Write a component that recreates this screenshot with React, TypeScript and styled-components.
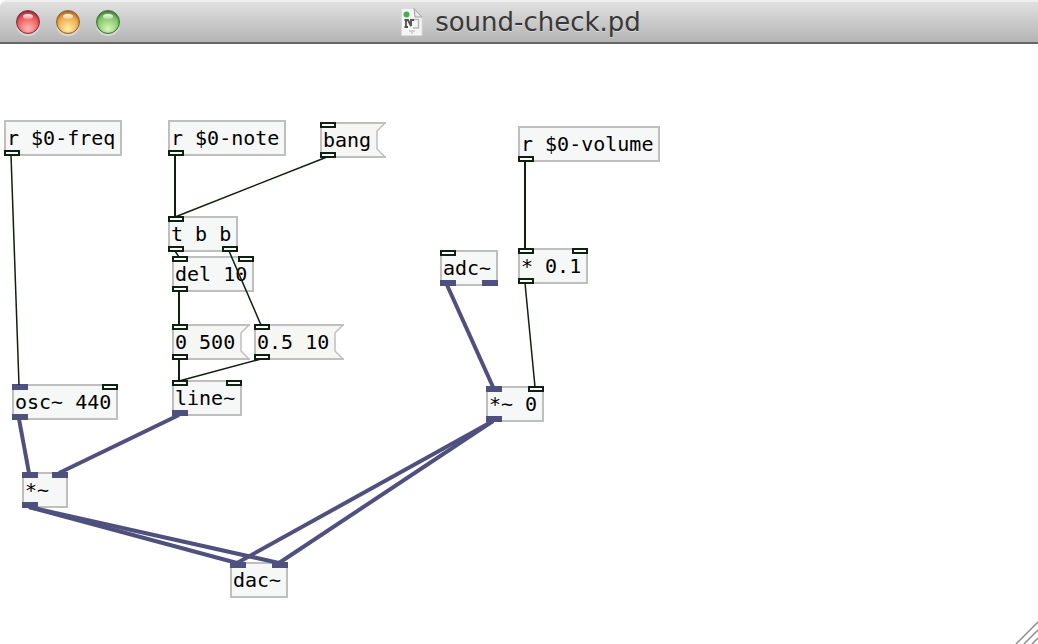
import React from 'react';
import styled, { createGlobalStyle } from 'styled-components';

const BAR = 44;
const CHAR = 12;
const BOX_HEIGHT = 36;
const PORT_WIDTH = 16;

const GlobalStyle = createGlobalStyle`
  *, *::before, *::after { box-sizing: border-box; }
  body { margin: 0; background: #fff; }
`;

const Window = styled.div`
  display: flex;
  flex-direction: column;
  min-height: 100vh;
  background: #fff;
`;

const TitleBar = styled.header`
  display: grid;
  grid-template-columns: 1fr auto 1fr;
  align-items: center;
  height: ${BAR}px;
  padding: 0 12px 0 16px;
  border-top: 2px solid #efefef;
  border-bottom: 2px solid #666;
  border-top-left-radius: 6px;
  background: linear-gradient(#e1e1e1, #b4b4b4);
`;

const Lights = styled.div`
  display: flex;
  gap: 16px;
`;

const Light = styled.button<{ $edge: string; $mid: string; $glow: string }>`
  position: relative;
  width: 24px;
  height: 24px;
  padding: 0;
  border: 1px solid ${p => p.$edge};
  border-radius: 50%;
  background: radial-gradient(circle at 50% 80%, ${p => p.$glow} 0%, ${p => p.$mid} 60%, ${p => p.$edge} 100%);
  box-shadow: inset 0 1px 2px ${p => p.$edge}, 0 2px 1px rgba(255, 255, 255, 0.45);

  &::after {
    content: '';
    position: absolute;
    top: 3px;
    left: 6px;
    width: 10px;
    height: 5px;
    border-radius: 50%;
    background: linear-gradient(rgba(255, 255, 255, 0.95), rgba(255, 255, 255, 0.3));
  }
`;

const Title = styled.h1`
  display: flex;
  align-items: center;
  gap: 12px;
  margin: 0;
  color: #383838;
  font: 400 26px/38px 'DejaVu Sans', sans-serif;
  text-shadow: 0 1px 0 rgba(255, 255, 255, 0.4);
`;

const Canvas = styled.main`
  position: relative;
  flex: 1;
  min-height: 560px;
  overflow: hidden;
  color: #000;
  font: 20px/24px 'DejaVu Sans Mono', monospace;
`;

const ObjectBox = styled.div<{ $x: number; $y: number; $w: number }>`
  position: absolute;
  left: ${p => p.$x}px;
  top: ${p => p.$y}px;
  width: ${p => p.$w}px;
  height: ${BOX_HEIGHT}px;
  padding: 4px 1px;
  border: 2px solid #bfbfbf;
  background: #f6f8f7;
  white-space: pre;
`;

const MessageBox = styled.button<{ $x: number; $y: number; $w: number }>`
  position: absolute;
  left: ${p => p.$x}px;
  top: ${p => p.$y}px;
  width: ${p => p.$w}px;
  height: ${BOX_HEIGHT}px;
  padding: 0 3px;
  border: 0;
  background: none;
  color: inherit;
  font: inherit;
  text-align: left;
  white-space: pre;
`;

const MessageText = styled.span`
  position: relative;
`;

const Overlay = styled.svg`
  position: absolute;
  inset: 0;
  width: 100%;
  height: 100%;
  pointer-events: none;
`;

const Port = styled.i<{ $side: 'top' | 'bottom'; $left: number; $signal: boolean }>`
  position: absolute;
  ${p => p.$side}: 0;
  left: ${p => p.$left}px;
  width: ${PORT_WIDTH}px;
  height: 6px;
  border: 2px solid ${p => (p.$signal ? '#50507f' : '#102010')};
  background: ${p => (p.$signal ? '#50507f' : '#fff')};
`;

const PortFrame = styled.span<{ $offset: number }>`
  position: absolute;
  inset: ${p => p.$offset}px;
`;

const Grip = styled.svg`
  position: absolute;
  right: 0;
  bottom: 0;
  width: 24px;
  height: 24px;
`;

type Node = {
  kind: 'object' | 'message';
  text: string;
  x: number;
  y: number;
  ins: string;
  outs: string;
};

// Each letter is one inlet or outlet: c for control, s for signal.
const nodes: Record<string, Node> = {
  freq: { kind: 'object', text: 'r $0-freq', x: 4, y: 76, ins: '', outs: 'c' },
  note: { kind: 'object', text: 'r $0-note', x: 168, y: 76, ins: '', outs: 'c' },
  bang: { kind: 'message', text: 'bang', x: 320, y: 78, ins: 'c', outs: 'c' },
  volume: { kind: 'object', text: 'r $0-volume', x: 518, y: 82, ins: '', outs: 'c' },
  trigger: { kind: 'object', text: 't b b', x: 168, y: 172, ins: 'c', outs: 'cc' },
  adc: { kind: 'object', text: 'adc~', x: 440, y: 206, ins: 'c', outs: 'ss' },
  scale: { kind: 'object', text: '* 0.1', x: 518, y: 204, ins: 'cc', outs: 'c' },
  delay: { kind: 'object', text: 'del 10', x: 172, y: 212, ins: 'cc', outs: 'c' },
  fall: { kind: 'message', text: '0 500', x: 172, y: 280, ins: 'c', outs: 'c' },
  rise: { kind: 'message', text: '0.5 10', x: 254, y: 280, ins: 'c', outs: 'c' },
  line: { kind: 'object', text: 'line~', x: 172, y: 336, ins: 'cc', outs: 's' },
  osc: { kind: 'object', text: 'osc~ 440', x: 12, y: 340, ins: 'sc', outs: 's' },
  gain: { kind: 'object', text: '*~ 0', x: 486, y: 342, ins: 'sc', outs: 's' },
  mult: { kind: 'object', text: '*~', x: 22, y: 428, ins: 'ss', outs: 's' },
  dac: { kind: 'object', text: 'dac~', x: 230, y: 518, ins: 'ss', outs: '' },
};

const cords: [string, number, string, number][] = [
  ['freq', 0, 'osc', 0],
  ['note', 0, 'trigger', 0],
  ['bang', 0, 'trigger', 0],
  ['trigger', 0, 'delay', 0],
  ['trigger', 1, 'rise', 0],
  ['delay', 0, 'fall', 0],
  ['fall', 0, 'line', 0],
  ['rise', 0, 'line', 0],
  ['volume', 0, 'scale', 0],
  ['scale', 0, 'gain', 1],
  ['adc', 0, 'gain', 0],
  ['osc', 0, 'mult', 0],
  ['line', 0, 'mult', 1],
  ['mult', 0, 'dac', 0],
  ['mult', 0, 'dac', 1],
  ['gain', 0, 'dac', 0],
  ['gain', 0, 'dac', 1],
];

const widthOf = (n: Node) =>
  Math.max(n.text.length, 3) * CHAR + (n.kind === 'message' ? 18 : 10);

const portLeft = (n: Node, ports: string, i: number) =>
  ports.length < 2 ? 0 : ((widthOf(n) - PORT_WIDTH) * i) / (ports.length - 1);

function Ports({ node, offset }: { node: Node; offset: number }) {
  return (
    <PortFrame $offset={offset} aria-hidden="true">
      {[...node.ins].map((c, i) => (
        <Port key={`in${i}`} $side="top" $left={portLeft(node, node.ins, i)} $signal={c === 's'} />
      ))}
      {[...node.outs].map((c, i) => (
        <Port key={`out${i}`} $side="bottom" $left={portLeft(node, node.outs, i)} $signal={c === 's'} />
      ))}
    </PortFrame>
  );
}

function PatchNode({ node }: { node: Node }) {
  const w = widthOf(node);
  if (node.kind === 'object') {
    return (
      <ObjectBox $x={node.x} $y={node.y} $w={w}>
        {node.text}
        <Ports node={node} offset={-2} />
      </ObjectBox>
    );
  }
  return (
    <MessageBox type="button" $x={node.x} $y={node.y} $w={w}>
      <Overlay aria-hidden="true" fill="none" stroke="#bfbfbf">
        <path fill="#f6f6f4" stroke="none" d={`M1 1H${w - 1}L${w - 9} 9V27L${w - 1} 35H1Z`} />
        <path strokeWidth="2" d={`M${w} 1H1V35H${w}`} />
        <path strokeWidth="1.5" d={`M${w - 1} 1L${w - 9} 9V27L${w - 1} 35`} />
      </Overlay>
      <MessageText>{node.text}</MessageText>
      <Ports node={node} offset={0} />
    </MessageBox>
  );
}

function Cords() {
  return (
    <Overlay aria-hidden="true">
      {cords.map(([from, out, to, inlet]) => {
        const a = nodes[from];
        const b = nodes[to];
        const signal = a.outs[out] === 's';
        const x1 = a.x + portLeft(a, a.outs, out) + 7;
        const x2 = b.x + portLeft(b, b.ins, inlet) + 7;
        return (
          <line
            key={`${from}${out}${to}${inlet}`}
            x1={x1}
            y1={a.y + BOX_HEIGHT - 1}
            x2={x2}
            y2={b.y + 1}
            stroke={signal ? '#50507f' : '#102010'}
            strokeWidth={signal ? 4 : x1 === x2 ? 2 : 1.5}
          />
        );
      })}
    </Overlay>
  );
}

function DocumentIcon() {
  return (
    <svg width="22" height="28" viewBox="0 0 22 28" aria-hidden="true">
      <path d="M0.500 0.500H13L21 9V27.500H0.500Z" fill="#f5f5f5" stroke="#dadada" />
      <path d="M13 0.500L21 9H14Z" fill="#e6e6e6" stroke="#a0a0a0" />
      <path d="M12 11.500H17.500V20H12" fill="none" stroke="#b9b9b9" strokeWidth="1.500" />
      <path d="M5 12V19M3.500 12H7L10 18V12H13M3.500 19H7" fill="none" stroke="#505050" strokeWidth="1.800" />
      <circle cx="5.500" cy="6.500" r="3" fill="#42b04c" />
      <path d="M8 23H14M11 23V26" stroke="#d2d2d2" strokeWidth="2" />
    </svg>
  );
}

export default function App() {
  return (
    <Window>
      <GlobalStyle />
      <TitleBar>
        <Lights>
          <Light type="button" aria-label="Close" $edge="#843039" $mid="#ee5355" $glow="#ffb9b5" />
          <Light type="button" aria-label="Minimize" $edge="#96602a" $mid="#eca447" $glow="#fff0a0" />
          <Light type="button" aria-label="Zoom" $edge="#3f7434" $mid="#7fc466" $glow="#d4f7b4" />
        </Lights>
        <Title>
          <DocumentIcon />
          sound-check.pd
        </Title>
      </TitleBar>
      <Canvas>
        {Object.entries(nodes).map(([id, node]) => (
          <PatchNode key={id} node={node} />
        ))}
        <Cords />
        <Grip viewBox="0 0 24 24" aria-hidden="true" stroke="#8c8c8c" strokeWidth="1.500">
          <path d="M2 24L24 2M10 24L24 10M18 24L24 18" />
        </Grip>
      </Canvas>
    </Window>
  );
}
